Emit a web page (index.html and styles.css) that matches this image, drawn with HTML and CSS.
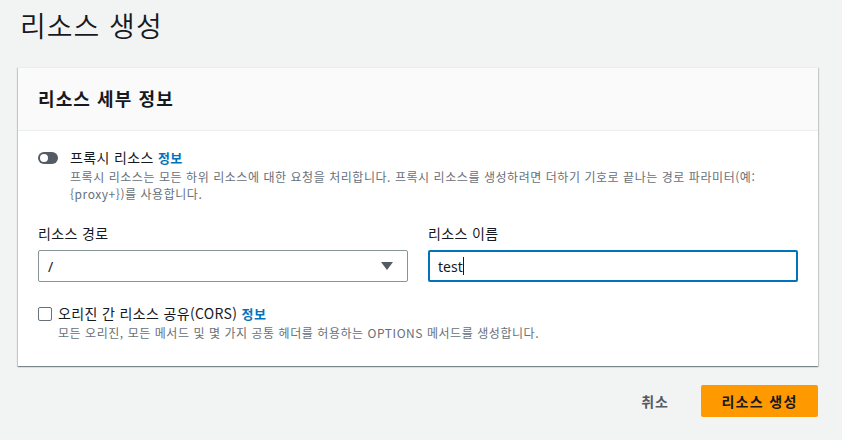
FILE: index.html
```html
<!DOCTYPE html>
<html lang="ko">
<head>
<meta charset="utf-8">
<link rel="stylesheet" href="styles.css">
</head>
<body>
<div class="page">
  <h1 class="title">리소스 생성</h1>
  <section class="card">
    <header class="card-header"><h2>리소스 세부 정보</h2></header>
    <div class="card-body">
      <div class="option">
        <span class="toggle"><span class="knob"></span></span>
        <div class="option-text">
          <div class="option-label">프록시 리소스 <a class="info">정보</a></div>
          <div class="option-desc">프록시 리소스는 모든 하위 리소스에 대한 요청을 처리합니다. 프록시 리소스를 생성하려면 더하기 기호로 끝나는 경로 파라미터(예: {proxy+})를 사용합니다.</div>
        </div>
      </div>
      <div class="fields">
        <div class="field">
          <label class="field-label">리소스 경로</label>
          <div class="select"><span>/</span><svg class="caret" width="12" height="8" viewBox="0 0 12 8"><path d="M0 0h12L6 8z" fill="#545b64"/></svg></div>
        </div>
        <div class="field">
          <label class="field-label">리소스 이름</label>
          <div class="input focused"><span>test</span><span class="cursor"></span></div>
        </div>
      </div>
      <div class="option cors">
        <span class="checkbox"></span>
        <div class="option-text">
          <div class="option-label">오리진 간 리소스 공유(CORS) <a class="info">정보</a></div>
          <div class="option-desc">모든 오리진, 모든 메서드 및 몇 가지 공통 헤더를 허용하는 OPTIONS 메서드를 생성합니다.</div>
        </div>
      </div>
    </div>
  </section>
  <div class="actions">
    <button class="btn-link">취소</button>
    <button class="btn-primary">리소스 생성</button>
  </div>
</div>
</body>
</html>
```
FILE: styles.css
```css
* { box-sizing: border-box; }
html, body { margin: 0; padding: 0; }
body {
  background: #f2f3f3;
  font-family: "Noto Sans", "Noto Sans CJK KR", sans-serif;
  color: #16191f;
  width: 842px;
  height: 440px;
  overflow: hidden;
}
.page { padding: 0 24px 0 18px; }
.title {
  margin: 5px 0 0 2px;
  font-size: 28px;
  line-height: 40px;
  color: #16191f;
  font-family: "Noto Sans CJK KR", sans-serif;
  font-weight: 350;
  letter-spacing: 1px;
}
.card {
  margin-top: 22px;
  width: 800px;
  background: #fff;
  border-top: 1px solid #eaeded;
  box-shadow: 0 1px 1px 0 rgba(0,28,36,.3), 1px 1px 1px 0 rgba(0,28,36,.15), -1px 1px 1px 0 rgba(0,28,36,.15);
}
.card-header {
  background: #fafafa;
  border-bottom: 1px solid #eaeded;
  height: 63px;
  padding: 0 20px 3px;
  display: flex;
  align-items: center;
}
.card-header h2 {
  margin: 0;
  font-size: 18px;
  font-weight: 700;
  font-family: "Noto Sans CJK KR", sans-serif;
  line-height: 24px;
  letter-spacing: 1.1px;
}
.card-body { padding: 16px 20px 25px; }
.option { display: flex; align-items: flex-start; }
.toggle {
  width: 20px; height: 12px;
  margin-top: 5px;
  border-radius: 6px;
  background: #545b64;
  position: relative;
  flex: none;
}
.knob {
  position: absolute;
  left: 2px; top: 2px;
  width: 8px; height: 8px;
  border-radius: 50%;
  background: #fff;
}
.option-text { margin-left: 12px; }
.option-label {
  font-size: 14px;
  line-height: 21px;
  font-family: "Noto Sans CJK KR", sans-serif;
  letter-spacing: 0.35px;
}
.info { color: #0073bb; font-weight: 700; font-size: 13px; }
.option-desc {
  font-size: 12px;
  line-height: 17px;
  color: #687078;
  font-family: "Noto Sans CJK KR", sans-serif;
  letter-spacing: 0.55px;
  padding-right: 20px;
}
.fields {
  display: grid;
  grid-template-columns: 370px 370px;
  column-gap: 20px;
  margin-top: 20px;
}
.field-label {
  display: block;
  font-size: 14px;
  line-height: 22px;
  margin-bottom: 6px;
  font-family: "Noto Sans CJK KR", sans-serif;
  letter-spacing: 0.35px;
}
.select, .input {
  height: 32px;
  border: 1px solid #aab7b8;
  border-radius: 2px;
  display: flex;
  align-items: center;
  padding: 0 12px 0 9px;
  font-size: 14px;
  font-family: "Noto Sans", sans-serif;
}
.select { justify-content: space-between; border-color: #879596; }
.caret { margin-right: 2px; }
.input.focused {
  border: 2px solid #0073bb;
  padding-left: 8px;
}
.cursor {
  display: inline-block;
  width: 1px; height: 18px;
  background: #16191f;
}
.cors { margin-top: 21px; }
.checkbox {
  width: 14px; height: 14px;
  border: 1px solid #687078;
  border-radius: 2px;
  margin-top: 4px;
  flex: none;
  background: #fff;
}
.cors .option-text { margin-left: 6px; }
.actions {
  width: 800px;
  display: flex;
  justify-content: flex-end;
  align-items: center;
  margin-top: 19px;
  gap: 20px;
}
button {
  font-family: "Noto Sans CJK KR", sans-serif;
  font-size: 14px;
  border: none;
  cursor: pointer;
}
.btn-link {
  background: transparent;
  color: #545b64;
  padding: 0 12px;
  height: 32px;
  font-weight: 700;
  letter-spacing: 1px;
}
.btn-primary {
  background: #ff9900;
  color: #16191f;
  font-weight: 700;
  height: 32px;
  width: 117px;
  border-radius: 2px;
  letter-spacing: 1.3px;
}
```
